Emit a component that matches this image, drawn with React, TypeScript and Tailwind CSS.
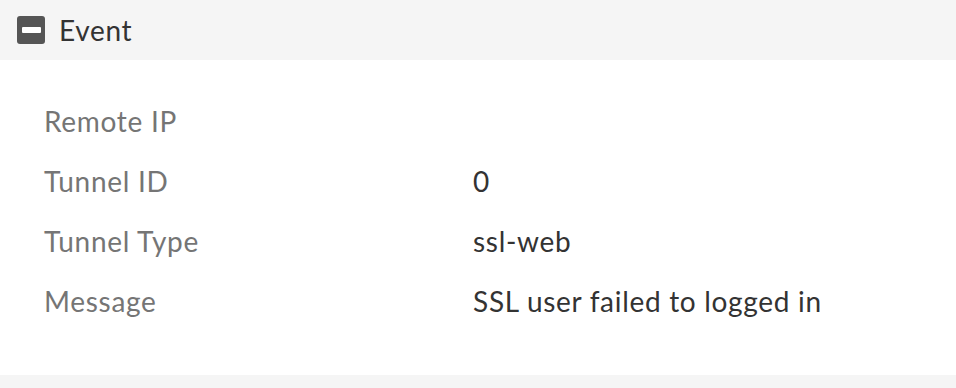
import React from "react";

const rows: [string, string][] = [
  ["Remote IP", ""],
  ["Tunnel ID", "0"],
  ["Tunnel Type", "ssl-web"],
  ["Message", "SSL user failed to logged in"],
];

export default function App() {
  return (
    <div className="w-[956px] h-[388px] bg-[#f5f5f5] overflow-hidden tracking-[0.7px]" style={{ fontFamily: "Lato, 'Open Sans', sans-serif" }}>
      <div className="h-[60px] flex items-center pl-[17px] gap-[14px]">
        <div className="w-[28px] h-[28px] rounded-[3px] bg-[#555555] flex items-center justify-center">
          <div className="w-[19px] h-[6px] bg-white rounded-[1px]" />
        </div>
        <span className="text-[28px] text-[#333333] leading-none">Event</span>
      </div>
      <div className="bg-white h-[315px] pt-[31px] pl-[44px]">
        {rows.map(([k, v]) => (
          <div key={k} className="flex h-[60px] items-center text-[28px]">
            <div className="w-[429px] text-[#757575]">{k}</div>
            <div className="text-[#333333]">{v}</div>
          </div>
        ))}
      </div>
    </div>
  );
}
